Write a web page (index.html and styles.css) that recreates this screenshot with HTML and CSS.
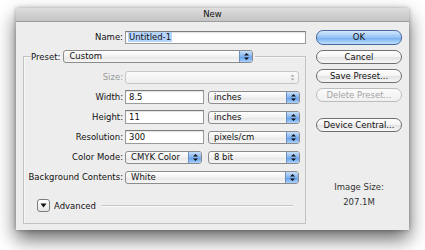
FILE: index.html
```html
<!DOCTYPE html>
<html lang="en">
  <head>
    <meta charset="UTF-8" />
    <meta name="viewport" content="width=device-width, initial-scale=1.0" />
    <link rel="stylesheet" href="styles.css">
  </head>
  <body>
    <div class="window">
      <div class="titlebar">New</div>

      <div class="content">
        <div class="main">
          <div class="row name-row">
            <div class="label">Name:</div>
            <div class="field name-field"><span class="selected">Untitled-1</span></div>
          </div>

          <fieldset class="group">
            <legend class="legend">
              <span class="legend-label">Preset:</span>
              <div class="popup preset-popup">
                <span class="popup-text">Custom</span>
                <span class="arrows">
                  <svg width="7" height="9" viewBox="0 0 7 9"><path d="M1 3.6 L3.5 1 L6 3.6Z M1 5.4 L3.5 8 L6 5.4Z" /></svg>
                </span>
              </div>
            </legend>

            <div class="rows">
              <div class="row">
                <div class="label disabled-label">Size:</div>
                <div class="popup disabled wide">
                  <span class="popup-text"></span>
                  <span class="arrows">
                    <svg width="7" height="9" viewBox="0 0 7 9"><path d="M1.5 3.4 L3.5 1.4 L5.5 3.4Z M1.5 5.6 L3.5 7.6 L5.5 5.6Z" /></svg>
                  </span>
                </div>
              </div>

              <div class="row">
                <div class="label">Width:</div>
                <div class="field short">8.5</div>
                <div class="popup unit">
                  <span class="popup-text">inches</span>
                  <span class="arrows">
                    <svg width="7" height="9" viewBox="0 0 7 9"><path d="M1 3.6 L3.5 1 L6 3.6Z M1 5.4 L3.5 8 L6 5.4Z" /></svg>
                  </span>
                </div>
              </div>

              <div class="row">
                <div class="label">Height:</div>
                <div class="field short">11</div>
                <div class="popup unit">
                  <span class="popup-text">inches</span>
                  <span class="arrows">
                    <svg width="7" height="9" viewBox="0 0 7 9"><path d="M1 3.6 L3.5 1 L6 3.6Z M1 5.4 L3.5 8 L6 5.4Z" /></svg>
                  </span>
                </div>
              </div>

              <div class="row">
                <div class="label">Resolution:</div>
                <div class="field short">300</div>
                <div class="popup unit">
                  <span class="popup-text">pixels/cm</span>
                  <span class="arrows">
                    <svg width="7" height="9" viewBox="0 0 7 9"><path d="M1 3.6 L3.5 1 L6 3.6Z M1 5.4 L3.5 8 L6 5.4Z" /></svg>
                  </span>
                </div>
              </div>

              <div class="row">
                <div class="label">Color Mode:</div>
                <div class="popup mode">
                  <span class="popup-text">CMYK Color</span>
                  <span class="arrows">
                    <svg width="7" height="9" viewBox="0 0 7 9"><path d="M1 3.6 L3.5 1 L6 3.6Z M1 5.4 L3.5 8 L6 5.4Z" /></svg>
                  </span>
                </div>
                <div class="popup unit">
                  <span class="popup-text">8 bit</span>
                  <span class="arrows">
                    <svg width="7" height="9" viewBox="0 0 7 9"><path d="M1 3.6 L3.5 1 L6 3.6Z M1 5.4 L3.5 8 L6 5.4Z" /></svg>
                  </span>
                </div>
              </div>

              <div class="row">
                <div class="label">Background Contents:</div>
                <div class="popup wide">
                  <span class="popup-text">White</span>
                  <span class="arrows">
                    <svg width="7" height="9" viewBox="0 0 7 9"><path d="M1 3.6 L3.5 1 L6 3.6Z M1 5.4 L3.5 8 L6 5.4Z" /></svg>
                  </span>
                </div>
              </div>
            </div>

            <div class="advanced">
              <div class="disclosure">
                <svg width="7" height="5" viewBox="0 0 7 5"><path d="M0.5 0.5 L6.5 0.5 L3.5 4.5Z" /></svg>
              </div>
              <span class="advanced-text">Advanced</span>
              <div class="separator"></div>
            </div>
          </fieldset>
        </div>

        <div class="side">
          <div class="button default">OK</div>
          <div class="button">Cancel</div>
          <div class="button">Save Preset...</div>
          <div class="button disabled-button">Delete Preset...</div>
          <div class="button device">Device Central...</div>

          <div class="image-size">
            <div>Image Size:</div>
            <div class="size-value">207.1M</div>
          </div>
        </div>
      </div>
    </div>
  </body>
</html>
```

FILE: styles.css
```css
html {
  height: 250px;
  background-color: #fff;
}

body {
  margin: 0;
  padding: 8px 0 20px 16px;
  background-color: #fff;
  font-family: "DejaVu Sans", "Liberation Sans", sans-serif;
  font-size: 8.5px;
  color: #111;
}

.window {
  width: 393px;
  height: 222px;
  background-color: #ededed;
  box-shadow: 0 9px 18px rgba(0, 0, 0, 0.6), 0 0 4px rgba(0, 0, 0, 0.3);
}

.titlebar {
  height: 13px;
  line-height: 13px;
  text-align: center;
  color: #111;
  background: linear-gradient(#dedede, #c4c4c4);
  border-bottom: 1px solid #9c9c9c;
}

.content {
  display: flex;
  padding: 8px 0 0 7px;
}

.main {
  width: 283px;
}

.row {
  display: flex;
  align-items: center;
  height: 14px;
}

.label {
  width: 99px;
  margin-right: 2px;
  text-align: right;
  white-space: nowrap;
}

.name-row .label {
  width: 100px;
}

.disabled-label {
  color: #9a9a9a;
}

/* text fields */
.field {
  box-sizing: border-box;
  height: 14px;
  line-height: 12px;
  padding-left: 3px;
  background-color: #fff;
  border: 1px solid #9a9a9a;
  border-top-color: #7c7c7c;
  box-shadow: inset 0 1px 1px rgba(0, 0, 0, 0.12);
}

.name-field {
  width: 181px;
  height: 13px;
  line-height: 11px;
  padding-left: 2px;
}

.selected {
  background-color: #b6d4fb;
  padding: 0 1px;
}

.short {
  width: 79px;
  margin-right: 4px;
}

/* group box */
.group {
  margin: 6px 0 0 0;
  padding: 0 0 11px 0;
  border: 1px solid #c2c2c2;
  box-shadow: inset 1px 1px 0 #f8f8f8;
}

.legend {
  display: flex;
  align-items: center;
  margin-left: 7px;
  padding: 0 2px 0 0;
}

.legend-label {
  margin-right: 3px;
}

.rows {
  display: flex;
  flex-direction: column;
  gap: 6px;
  margin-top: 7px;
}

/* pop-up buttons */
.popup {
  box-sizing: border-box;
  display: flex;
  height: 13px;
  border: 1px solid #8c8c8c;
  border-radius: 3px;
  background: linear-gradient(#ffffff, #f1f1f1 50%, #e6e6e6 51%, #f6f6f6);
  overflow: hidden;
}

.popup-text {
  flex: 1;
  padding-left: 5px;
  line-height: 11px;
  white-space: nowrap;
}

.arrows {
  width: 12px;
  display: flex;
  align-items: center;
  justify-content: center;
  border-left: 1px solid #6c8fc0;
  background: linear-gradient(#c6e0fb, #7fb2ee 50%, #5f9ce8 51%, #a9d1fb);
}

.arrows svg {
  fill: #111;
}

.preset-popup {
  width: 190px;
}

.wide {
  width: 174px;
}

.unit {
  width: 92px;
}

.mode {
  width: 77px;
  margin-right: 6px;
}

.popup.disabled {
  border-color: #c6c6c6;
  background: linear-gradient(#fafafa, #eeeeee);
}

.popup.disabled .arrows {
  border-left: none;
  background: none;
}

.popup.disabled .arrows svg {
  fill: #a8a8a8;
}

/* advanced */
.advanced {
  display: flex;
  align-items: center;
  margin: 15px 12px 0 13px;
}

.disclosure {
  box-sizing: border-box;
  width: 13px;
  height: 13px;
  display: flex;
  align-items: center;
  justify-content: center;
  border: 1px solid #7d7d7d;
  border-radius: 3px;
  background: linear-gradient(#ffffff, #e4e4e4);
}

.disclosure svg {
  fill: #111;
}

.advanced-text {
  margin-left: 4px;
}

.separator {
  flex: 1;
  height: 0;
  margin-left: 6px;
  border-top: 1px solid #c6c6c6;
  border-bottom: 1px solid #fafafa;
}

/* buttons */
.side {
  width: 86px;
  margin-left: 10px;
  display: flex;
  flex-direction: column;
  gap: 5px;
}

.button {
  box-sizing: border-box;
  height: 14px;
  line-height: 12px;
  text-align: center;
  border: 1px solid #6f6f6f;
  border-radius: 7px;
  background: linear-gradient(#ffffff, #f3f3f3 50%, #e3e3e3 51%, #f7f7f7);
  white-space: nowrap;
}

.button.default {
  height: 15px;
  line-height: 13px;
  border-color: #46689c;
  background: linear-gradient(#d4e8fd, #95c2f3 50%, #72abee 51%, #bfe0ff);
}

.disabled-button {
  color: #a4a4a4;
  border-color: #bdbdbd;
  background: linear-gradient(#fbfbfb, #f0f0f0);
}

.device {
  margin-top: 11px;
}

.image-size {
  margin-top: 43px;
  text-align: center;
  color: #333;
  line-height: 15px;
}
```
